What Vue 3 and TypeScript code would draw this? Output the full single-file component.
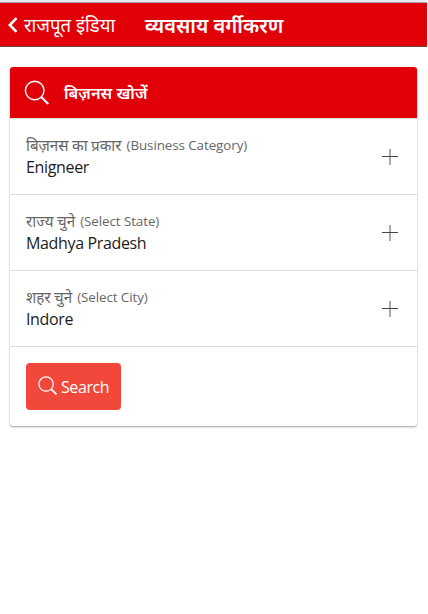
<script setup lang="ts">
interface Row { hindi: string; english: string; value: string }
const rows: Row[] = [
  { hindi: 'बिज़नस का प्रकार', english: '(Business Category)', value: 'Enigneer' },
  { hindi: 'राज्य चुने', english: '(Select State)', value: 'Madhya Pradesh' },
  { hindi: 'शहर चुने', english: '(Select City)', value: 'Indore' },
]
</script>

<template>
  <div class="page">
    <header class="bar">
      <svg class="chev" width="10" height="16" viewBox="0 0 10 16"><path d="M8.500 1.200 1.800 8l6.700 6.800" fill="none" stroke="#fff" stroke-width="2.600" /></svg>
      <span class="back">राजपूत इंडिया</span>
      <h1>व्यवसाय वर्गीकरण</h1>
    </header>
    <main class="card">
      <div class="head">
        <svg width="26" height="26" viewBox="0 0 26 26" fill="none" stroke="#fff" stroke-width="1.400"><circle cx="10.700" cy="10.500" r="9.300" /><path d="m17.300 17 7 7" stroke-width="2" /></svg>
        <span>बिज़नस खोजें</span>
      </div>
      <div v-for="r in rows" :key="r.value" class="row">
        <div class="text">
          <div class="label"><span class="hindi">{{ r.hindi }}</span><span>{{ r.english }}</span></div>
          <div class="value">{{ r.value }}</div>
        </div>
        <svg width="16" height="16" viewBox="0 0 16 16"><path d="M8 0v16" stroke="#aaa" stroke-width="2" /><path d="M0 7.500h16" stroke="#444" /></svg>
      </div>
      <div class="foot">
        <button type="button"><svg width="20" height="20" viewBox="0 0 26 26" fill="none" stroke="#fff" stroke-width="1.600"><circle cx="10.500" cy="10.500" r="9.300" /><path d="m17 17 7 7" stroke-width="2.400" /></svg><span>Search</span></button>
      </div>
    </main>
  </div>
</template>

<style>
body { margin: 0; background: #fff; }
</style>
<style scoped>
.page { font-family: "Open Sans", "Noto Sans", sans-serif; height: 614px; }
.bar { box-sizing: border-box; height: 47px; background: #e10008; border-top: 2px solid #ececf2; border-bottom: 1px solid #6b4444; box-shadow: inset 0 1px #a3a3b4; margin-right: 1px; color: #fff; display: flex; align-items: center; padding: 1px 0 0 8px; }
.back { font-size: 18.500px; line-height: 26px; margin-left: 6px; width: 121px; white-space: nowrap; }
h1 { font-size: 20.100px; line-height: 26px; font-weight: 600; margin: 0; padding-top: 2px; white-space: nowrap; }
.card { margin: 20px 11px 0 10px; border-radius: 3px; overflow: hidden; box-shadow: 0 1px 2px rgba(0,0,0,.38); }
.head { height: 51px; background: #e10008; color: #fff; display: flex; align-items: center; padding-left: 14px; gap: 14px; font-size: 16.300px; font-weight: 600; }
.row { height: 75px; border-top: 1px solid #ddd; display: flex; align-items: center; justify-content: space-between; padding: 0 19px 0 16px; }
.text { height: 45px; }
.label { font-size: 13.400px; height: 22px; line-height: 22px; color: #666; display: flex; gap: 5px; white-space: nowrap; letter-spacing: -.08px; }
.hindi { font-size: 15.200px; word-spacing: -.5px; letter-spacing: 0; }
.value { font-size: 16px; letter-spacing: -.35px; line-height: 22px; color: #1c1c1c; }
.foot { height: 79px; border-top: 1px solid #ddd; display: flex; align-items: center; padding-left: 16px; }
button { width: 95px; height: 47px; border: 0; border-radius: 4px; background: #f2483b; color: #fff; font: 400 16px "Open Sans", "Noto Sans", sans-serif; letter-spacing: -.4px; display: flex; align-items: center; padding: 0 0 0 12px; gap: 3px; }
button svg { position: relative; top: -1px; }
</style>
